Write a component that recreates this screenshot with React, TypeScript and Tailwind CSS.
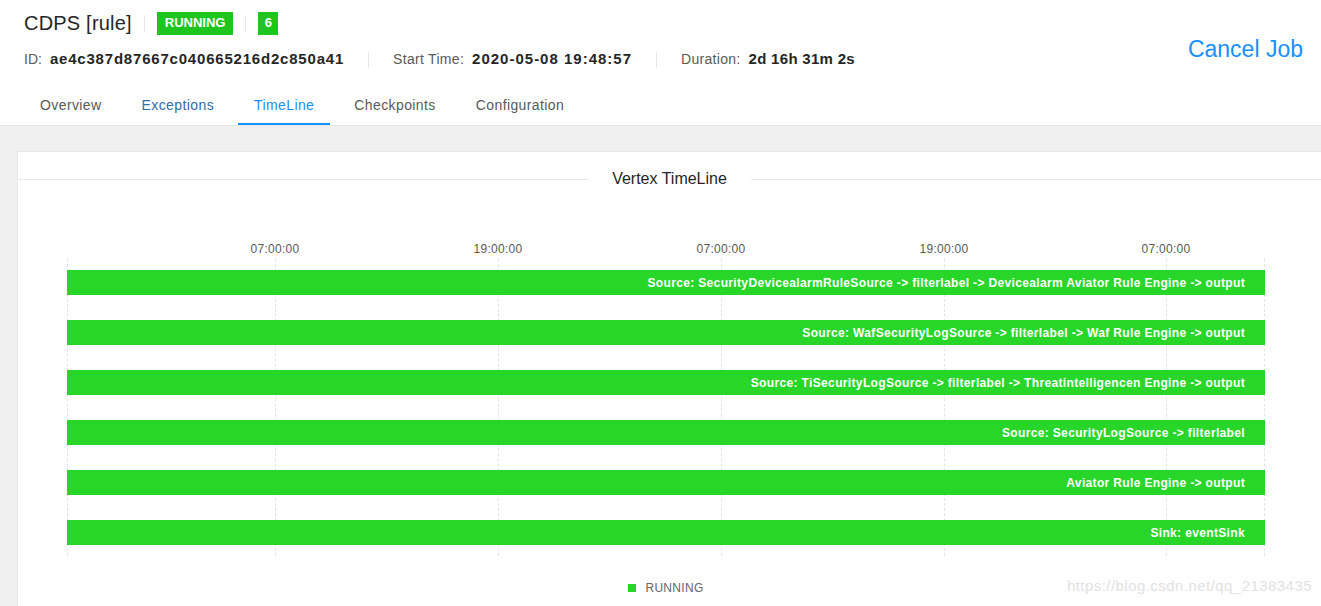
import React from 'react';

const tabs = [
  { label: 'Overview', cls: 'text-[#595959] border-transparent' },
  { label: 'Exceptions', cls: 'text-[#336c9e] border-transparent' },
  { label: 'TimeLine', cls: 'text-[#1890ff] border-[#1890ff]' },
  { label: 'Checkpoints', cls: 'text-[#595959] border-transparent' },
  { label: 'Configuration', cls: 'text-[#595959] border-transparent' },
];

const ticks = [
  { label: '07:00:00', pos: 'left-[208px]' },
  { label: '19:00:00', pos: 'left-[431px]' },
  { label: '07:00:00', pos: 'left-[654px]' },
  { label: '19:00:00', pos: 'left-[877px]' },
  { label: '07:00:00', pos: 'left-[1099px]' },
];

const gridLines = ['left-0', 'left-[208px]', 'left-[431px]', 'left-[654px]', 'left-[877px]', 'left-[1099px]', 'left-[1197px]'];

const vertices = [
  'Source: SecurityDevicealarmRuleSource -> filterlabel -> Devicealarm Aviator Rule Engine -> output',
  'Source: WafSecurityLogSource -> filterlabel -> Waf Rule Engine -> output',
  'Source: TiSecurityLogSource -> filterlabel -> Threatintelligencen Engine -> output',
  'Source: SecurityLogSource -> filterlabel',
  'Aviator Rule Engine -> output',
  'Sink: eventSink',
];

const Divider: React.FC = () => <div className="w-px h-[17px] bg-[#e8e8e8]" />;

const App: React.FC = () => {
  return (
    <div
      className="relative min-h-screen w-full overflow-hidden bg-[#f0f0f0] text-[#262626]"
      style={{ fontFamily: '"Liberation Sans", Arial, sans-serif' }}
    >
      {/* 头部 */}
      <header className="bg-white border-b border-[#e8e8e8]">
        <div className="flex items-start justify-between pt-[11px] pl-6 pr-[18px]">
          <div>
            <div className="flex items-center gap-3 h-6">
              <h1 className="text-[20px] leading-6 font-normal tracking-[0.2px]">CDPS [rule]</h1>
              <Divider />
              <span className="h-[23px] px-2 flex items-center bg-[#1ec51e] text-white text-[13px] font-bold">RUNNING</span>
              <Divider />
              <span className="h-[23px] w-5 flex items-center justify-center bg-[#1ec51e] text-white text-[13px] font-bold">6</span>
            </div>
            <div className="mt-[13px] flex items-center gap-6 h-[22px] text-[14px]">
              <div className="flex items-center gap-[8px]">
                <span className="text-[#595959]">ID:</span>
                <span className="font-bold text-[15px] tracking-[0.8px]">ae4c387d87667c040665216d2c850a41</span>
              </div>
              <Divider />
              <div className="flex items-center gap-[8px]">
                <span className="text-[#595959] tracking-[0.3px]">Start Time:</span>
                <span className="font-bold text-[15px] tracking-[1px]">2020-05-08 19:48:57</span>
              </div>
              <Divider />
              <div className="flex items-center gap-[8px]">
                <span className="text-[#595959] tracking-[0.3px]">Duration:</span>
                <span className="font-bold text-[15px] tracking-[0.3px]">2d 16h 31m 2s</span>
              </div>
            </div>
          </div>
          <a className="mt-[22px] text-[23px] leading-8 text-[#1890ff]">Cancel Job</a>
        </div>
        <nav className="mt-[9px] pl-6 flex gap-2 text-[14px]">
          {tabs.map((t) => (
            <div key={t.label} className={`px-4 pt-[15px] pb-[7px] leading-[22px] border-b-2 tracking-[0.4px] ${t.cls}`}>
              {t.label}
            </div>
          ))}
        </nav>
      </header>

      {/* 卡片 */}
      <section className="mt-[25px] ml-[17px] -mr-px bg-white border border-[#e8e8e8] pt-[15px] pb-10">
        <div className="flex items-center">
          <div className="flex-1 h-px bg-[#e8e8e8]" />
          <div className="px-6 text-[16px] leading-6 text-[#262626]">Vertex TimeLine</div>
          <div className="flex-1 h-px bg-[#e8e8e8]" />
        </div>

        <div className="relative mt-[46px] ml-[49px] w-[1198px] pb-[11px]">
          {gridLines.map((g) => (
            <div key={g} className={`absolute top-[22px] bottom-0 w-0 border-l border-dashed border-[#e4e4e4] ${g}`} />
          ))}
          <div className="relative h-6">
            {ticks.map((t, i) => (
              <span
                key={i}
                className={`absolute top-0 -translate-x-1/2 text-[12px] leading-6 text-[#595959] tracking-[0.3px] ${t.pos}`}
              >
                {t.label}
              </span>
            ))}
          </div>
          <div className="relative mt-[9px] flex flex-col gap-[25px]">
            {vertices.map((v) => (
              <div
                key={v}
                className="h-[25px] bg-[#28d62a] flex items-center justify-end pr-5 text-white text-[12px] font-bold tracking-[0.35px]"
              >
                {v}
              </div>
            ))}
          </div>
        </div>

        <div className="ml-[49px] w-[1198px] mt-[24px] flex items-center justify-center gap-[9px] h-4">
          <span className="w-2 h-2 bg-[#28d62a]" />
          <span className="text-[12px] text-[#666666] tracking-[0.3px]">RUNNING</span>
        </div>
      </section>

      <div className="absolute top-[576px] right-[9px] text-[15px] leading-5 tracking-[0.45px] text-[#e2e2e2]">
        https://blog.csdn.net/qq_21383435
      </div>
    </div>
  );
};

export default App;
